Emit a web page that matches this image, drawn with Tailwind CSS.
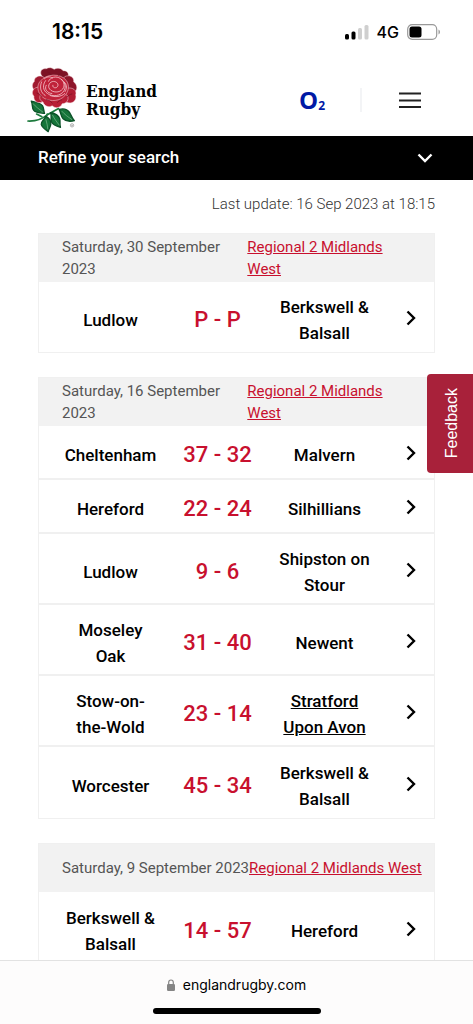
<!DOCTYPE html>
<html lang="en">
<head>
    <meta charset="UTF-8">
    <meta name="viewport" content="width=device-width, initial-scale=1.0">
    <title>Fixtures and Results - England Rugby</title>
    <script src="https://cdn.jsdelivr.net/npm/@tailwindcss/browser@4"></script>
</head>
<body class="h-screen flex flex-col overflow-hidden bg-white text-black font-['Roboto',sans-serif]">

    <!-- Shared icons -->
    <svg class="hidden">
        <symbol id="chevron" viewBox="0 0 10 16">
            <path d="M1.500 1.500 8 8l-6.500 6.500" fill="none" stroke="currentColor" stroke-width="2.400"/>
        </symbol>
    </svg>

    <!-- Status bar -->
    <div class="h-16 shrink-0 flex items-center justify-between pl-[52px] pr-8 font-['Inter',sans-serif]">
        <span class="text-[21px] font-semibold">18:15</span>
        <div class="flex items-center gap-2">
            <svg class="w-6 h-4" viewBox="0 0 24 16">
                <rect x="0" y="10" width="4" height="5.500" rx="1.500"/>
                <rect x="6.500" y="7.500" width="4" height="8" rx="1.500"/>
                <rect x="13" y="4" width="4" height="11.500" rx="1.500" fill="#cfcfcf"/>
                <rect x="19.500" y="1" width="4" height="14.500" rx="1.500" fill="#cfcfcf"/>
            </svg>
            <span class="text-base font-medium">4G</span>
            <svg class="w-[34px] h-4" viewBox="0 0 34 16">
                <rect x=".7" y=".7" width="29" height="14.600" rx="4.500" fill="none" stroke="#999" stroke-width="1.200"/>
                <rect x="2.500" y="2.500" width="12" height="11" rx="2.500"/>
                <path d="M31.500 5.500c2 1 2 4 0 5z" fill="#999"/>
            </svg>
        </div>
    </div>

    <!-- Site header -->
    <header class="h-[72px] shrink-0 flex items-center justify-between pl-[26px] pr-[52px]">
        <a href="#" class="flex items-center gap-[7px]" aria-label="England Rugby">
            <svg class="w-[53px] h-[68px]" viewBox="18 15 160 205">
                <!-- stem and leaves -->
                <g fill="none" stroke="#1c7a3d" stroke-width="5" stroke-linecap="round">
                    <path d="M24 181c22 1 45-7 60-20l32-18"/>
                    <path d="M82 160c-2 8-4 12-8 18M98 156l6 10M120 148l12 8M66 168l-16-8"/>
                </g>
                <g fill="#16753a" stroke="#0c5128" stroke-width="4" stroke-linejoin="round">
                    <path d="M34 121c12 3 28 5 34 14 4 7 3 15 6 23-14-2-27-1-33-10-6-8-2-17-7-27z"/>
                    <path d="M118 146c14-4 25 0 32 10 6 9 6 16 14 24-13 3-26 2-34-6-8-9-6-17-12-28z"/>
                    <path d="M77 167c11 5 17 13 16 23-1 9-6 14-8 23-9-6-19-13-21-22-1-10 10-13 13-24z"/>
                    <path d="M92 156c14 2 25 9 28 19 2 9-1 15 2 25-12-3-23-8-27-16-4-9 2-17-3-28z"/>
                </g>
                <g fill="none" stroke="#a9d3b5" stroke-width="1.500">
                    <path d="M39 128c8 10 20 18 31 27M126 151c9 11 20 18 31 26M78 176c3 11 5 20 6 30M98 163c6 12 13 21 21 31"/>
                </g>
                <!-- outer petals -->
                <g fill="#b01c33" stroke="#f6dde0" stroke-width="1.500">
                    <path fill="#7d1225" d="M66 45c-9-12 0-24 13-22 7-5 18-4 24 2 9-6 22-4 27 4 13-1 20 10 14 22l-20 25H78z"/>
                    <path fill="#a01a30" d="M72 49c-13-9-30-1-29 13-9 8-7 22 3 27l30 5 15-27z"/>
                    <path fill="#8e152a" d="M135 47c14-7 29 1 27 16 12 8 13 25 0 32l-31 8-13-35z"/>
                    <path d="M52 79c-14 3-19 18-10 27-2 14 11 23 24 18l31-10-17-33z"/>
                    <path d="M142 82c17-4 31 7 26 20 4 15-7 27-22 24l-29-8 7-30z"/>
                    <path fill="#b81e36" d="M64 99c-8 9-5 21 5 24 4 13 17 18 28 12 11 10 26 6 30-6 14 0 22-13 16-25l-31-17-33 2z"/>
                    <path fill="#c0223a" d="M61 61c-12 12-8 36 6 47 16 14 46 15 62 2 18-13 22-36 11-51-17-23-61-22-79 2z"/>
                </g>
                <!-- inner petals -->
                <g fill="none" stroke="#f3c3ca" stroke-width="2.500" stroke-linecap="round">
                    <path d="M77 59c-10 14-8 30 6 39 15 11 40 8 50-9 7-13 3-28-9-34"/>
                    <path d="M86 61c5-13 24-17 36-8 13 9 15 26 3 35-12 10-34 5-38-8-3-11 7-21 18-18 9 2 13 12 6 17-6 4-14 0-12-6"/>
                    <path d="M79 73c-7 12 4 24 17 25M91 104c15 6 33 4 44-6M65 63c-7 18-2 33 11 41M134 64c9 9 7 20 2 28M98 51c-9-6-19-4-25 3"/>
                </g>
                <g fill="none" stroke="#741023" stroke-width="2">
                    <path d="M83 34c5 1 9 4 11 8M124 36c-4 2-7 5-8 9M50 96c7 2 13 7 17 13M158 99c-7 1-13 5-17 10M78 116c8 1 15 5 20 12M127 117c-7 1-11 4-15 9"/>
                </g>
                <circle cx="157" cy="194" r="5" fill="none" stroke="#888" stroke-width="2"/>
                <circle cx="157" cy="194" r="2" fill="#888"/>
            </svg>
            <span class="flex flex-col text-[17px] leading-[18px] font-bold font-['DejaVu_Serif_Condensed','DejaVu_Serif',serif]">
                <span>England</span>
                <span>Rugby</span>
            </span>
        </a>
        <div class="flex items-center">
            <a href="#" class="flex items-end text-[#0019a5] font-['Open_Sans',sans-serif] font-bold leading-none" aria-label="O2">
                <span class="text-[24px] leading-6">O</span>
                <span class="text-xs leading-3">2</span>
            </a>
            <span class="w-0.5 h-6 bg-gray-100 ml-[35px] mr-[37px]"></span>
            <button type="button" aria-label="Menu">
                <svg class="w-[22px] h-4" viewBox="0 0 22 16">
                    <path d="M0 1.500h22M0 8.500h22M0 15h22" stroke="#222" stroke-width="1.800"/>
                </svg>
            </button>
        </div>
    </header>

    <button type="button" class="h-11 shrink-0 flex items-center justify-between pl-[38px] pr-10 bg-black text-white text-[17px] font-medium">
        Refine your search
        <svg class="w-4 h-[10px]" viewBox="0 0 16 10">
            <path d="M1.500 1.500 8 8l6.500-6.500" fill="none" stroke="#fff" stroke-width="2.400"/>
        </svg>
    </button>

    <main class="flex-1 min-h-0 overflow-hidden px-[38px] pt-3">
        <p class="text-right text-[15px] leading-6 font-light text-[#333]">Last update: 16 Sep 2023 at 18:15</p>

        <!-- 30 September -->
        <section class="mt-[17px] mb-6 border border-[#f0f0f0]">
            <div class="min-h-12 flex items-center justify-between px-[23px] bg-[#f2f2f2] text-[15px] leading-[22px]">
                <h2 class="text-[#555]">Saturday, 30 September 2023</h2>
                <a href="#" class="text-[#c8102e] underline">Regional 2 Midlands West</a>
            </div>
            <div class="min-h-[70px] grid grid-cols-[1fr_1fr_1fr_56px] items-center pl-[18px] pt-1.5 text-[17px] leading-[26px] font-medium text-center">
                <span class="px-[7px]">Ludlow</span>
                <span class="text-[22px] text-[#c8102e]">P - P</span>
                <span class="px-[7px]">Berkswell &amp; Balsall</span>
                <a href="#" class="pb-1 pl-7" aria-label="Match details"><svg class="w-[10px] h-4"><use href="#chevron"/></svg></a>
            </div>
        </section>

        <!-- 16 September -->
        <section class="mb-6 border border-[#f0f0f0]">
            <div class="min-h-12 flex items-center justify-between px-[23px] bg-[#f2f2f2] text-[15px] leading-[22px]">
                <h2 class="text-[#555]">Saturday, 16 September 2023</h2>
                <a href="#" class="text-[#c8102e] underline">Regional 2 Midlands West</a>
            </div>
            <div class="divide-y-2 divide-[#f0f0f0]">
                <div class="min-h-[54px] grid grid-cols-[1fr_1fr_1fr_56px] items-center pl-[18px] pt-1.5 text-[17px] leading-[26px] font-medium text-center">
                    <span class="px-[7px]">Cheltenham</span>
                    <span class="text-[22px] text-[#c8102e]">37 - 32</span>
                    <span class="px-[7px]">Malvern</span>
                    <a href="#" class="pb-1 pl-7" aria-label="Match details"><svg class="w-[10px] h-4"><use href="#chevron"/></svg></a>
                </div>
                <div class="min-h-[54px] grid grid-cols-[1fr_1fr_1fr_56px] items-center pl-[18px] pt-1.5 text-[17px] leading-[26px] font-medium text-center">
                    <span class="px-[7px]">Hereford</span>
                    <span class="text-[22px] text-[#c8102e]">22 - 24</span>
                    <span class="px-[7px]">Silhillians</span>
                    <a href="#" class="pb-1 pl-7" aria-label="Match details"><svg class="w-[10px] h-4"><use href="#chevron"/></svg></a>
                </div>
                <div class="min-h-[71px] grid grid-cols-[1fr_1fr_1fr_56px] items-center pl-[18px] pt-1.5 text-[17px] leading-[26px] font-medium text-center">
                    <span class="px-[7px]">Ludlow</span>
                    <span class="text-[22px] text-[#c8102e]">9 - 6</span>
                    <span class="px-[7px]">Shipston on Stour</span>
                    <a href="#" class="pb-1 pl-7" aria-label="Match details"><svg class="w-[10px] h-4"><use href="#chevron"/></svg></a>
                </div>
                <div class="min-h-[71px] grid grid-cols-[1fr_1fr_1fr_56px] items-center pl-[18px] pt-1.5 text-[17px] leading-[26px] font-medium text-center">
                    <span class="px-[7px]">Moseley Oak</span>
                    <span class="text-[22px] text-[#c8102e]">31 - 40</span>
                    <span class="px-[7px]">Newent</span>
                    <a href="#" class="pb-1 pl-7" aria-label="Match details"><svg class="w-[10px] h-4"><use href="#chevron"/></svg></a>
                </div>
                <div class="min-h-[71px] grid grid-cols-[1fr_1fr_1fr_56px] items-center pl-[18px] pt-1.5 text-[17px] leading-[26px] font-medium text-center">
                    <span class="px-[7px]">Stow-on-the-Wold</span>
                    <span class="text-[22px] text-[#c8102e]">23 - 14</span>
                    <a href="#" class="px-[7px] underline">Stratford Upon Avon</a>
                    <a href="#" class="pb-1 pl-7" aria-label="Match details"><svg class="w-[10px] h-4"><use href="#chevron"/></svg></a>
                </div>
                <div class="min-h-[71px] grid grid-cols-[1fr_1fr_1fr_56px] items-center pl-[18px] pt-1.5 text-[17px] leading-[26px] font-medium text-center">
                    <span class="px-[7px]">Worcester</span>
                    <span class="text-[22px] text-[#c8102e]">45 - 34</span>
                    <span class="px-[7px]">Berkswell &amp; Balsall</span>
                    <a href="#" class="pb-1 pl-7" aria-label="Match details"><svg class="w-[10px] h-4"><use href="#chevron"/></svg></a>
                </div>
            </div>
        </section>

        <!-- 9 September -->
        <section class="mb-6 border border-[#f0f0f0]">
            <div class="min-h-12 flex items-center justify-between px-[23px] bg-[#f2f2f2] text-[15px] leading-[22px] whitespace-nowrap">
                <h2 class="text-[#555]">Saturday, 9 September 2023</h2>
                <a href="#" class="text-[#c8102e] underline">Regional 2 Midlands West</a>
            </div>
            <div class="min-h-[71px] grid grid-cols-[1fr_1fr_1fr_56px] items-center pl-[18px] pt-1.5 text-[17px] leading-[26px] font-medium text-center">
                <span class="px-[7px]">Berkswell &amp; Balsall</span>
                <span class="text-[22px] text-[#c8102e]">14 - 57</span>
                <span class="px-[7px]">Hereford</span>
                <a href="#" class="pb-1 pl-7" aria-label="Match details"><svg class="w-[10px] h-4"><use href="#chevron"/></svg></a>
            </div>
        </section>
    </main>

    <!-- Feedback tab -->
    <button type="button" class="fixed right-0 top-[374px] w-[46px] h-[99px] flex items-center justify-center pl-1 rounded-l bg-[#a8213a] text-white text-base font-['Liberation_Sans',sans-serif]">
        <span class="[writing-mode:vertical-rl] rotate-180">Feedback</span>
    </button>

    <!-- Browser bar -->
    <footer class="h-16 shrink-0 flex flex-col items-center justify-between pt-3 pb-[10px] border-t border-[#e2e2e2] bg-[#fdfcfc] font-['Inter',sans-serif]">
        <div class="flex items-center gap-2 text-sm leading-6">
            <svg class="w-2 h-3" viewBox="0 0 8 12">
                <rect y="5" width="8" height="7" rx="1.200" fill="#858585"/>
                <path d="M1.700 5.500V3.300a2.300 2.300 0 0 1 4.600 0v2.200" fill="none" stroke="#858585" stroke-width="1.200"/>
            </svg>
            englandrugby.com
        </div>
        <div class="w-[168px] h-1.5 rounded-full bg-black"></div>
    </footer>
</body>
</html>
